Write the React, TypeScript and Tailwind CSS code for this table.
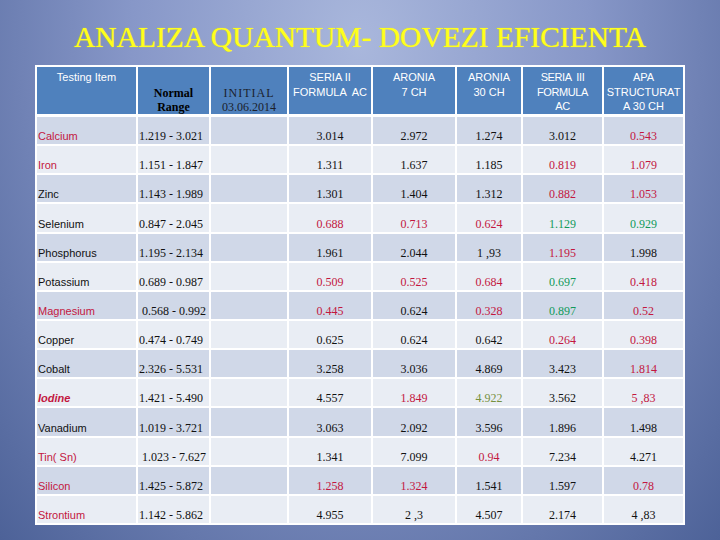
type Tone = "k" | "r" | "g" | "o";

type Row = {
  name: string;
  nameTone: Tone;
  range: string;
  rangePad?: boolean;
  italic?: boolean;
  values: [string, Tone][];
};

const tone: Record<Tone, string> = {
  k: "text-[#111111]",
  r: "text-[#c3173f]",
  g: "text-[#119a5a]",
  o: "text-[#77913e]",
};

const rows: Row[] = [
  { name: "Calcium", nameTone: "r", range: "1.219 - 3.021", values: [["3.014", "k"], ["2.972", "k"], ["1.274", "k"], ["3.012", "k"], ["0.543", "r"]] },
  { name: "Iron", nameTone: "r", range: "1.151 - 1.847", values: [["1.311", "k"], ["1.637", "k"], ["1.185", "k"], ["0.819", "r"], ["1.079", "r"]] },
  { name: "Zinc", nameTone: "k", range: "1.143 - 1.989", values: [["1.301", "k"], ["1.404", "k"], ["1.312", "k"], ["0.882", "r"], ["1.053", "r"]] },
  { name: "Selenium", nameTone: "k", range: "0.847 - 2.045", values: [["0.688", "r"], ["0.713", "r"], ["0.624", "r"], ["1.129", "g"], ["0.929", "g"]] },
  { name: "Phosphorus", nameTone: "k", range: "1.195 - 2.134", values: [["1.961", "k"], ["2.044", "k"], ["1 ,93", "k"], ["1.195", "r"], ["1.998", "k"]] },
  { name: "Potassium", nameTone: "k", range: "0.689 - 0.987", values: [["0.509", "r"], ["0.525", "r"], ["0.684", "r"], ["0.697", "g"], ["0.418", "r"]] },
  { name: "Magnesium", nameTone: "r", range: "0.568 - 0.992", rangePad: true, values: [["0.445", "r"], ["0.624", "k"], ["0.328", "r"], ["0.897", "g"], ["0.52", "r"]] },
  { name: "Copper", nameTone: "k", range: "0.474 - 0.749", values: [["0.625", "k"], ["0.624", "k"], ["0.642", "k"], ["0.264", "r"], ["0.398", "r"]] },
  { name: "Cobalt", nameTone: "k", range: "2.326 - 5.531", values: [["3.258", "k"], ["3.036", "k"], ["4.869", "k"], ["3.423", "k"], ["1.814", "r"]] },
  { name: "Iodine", nameTone: "r", italic: true, range: "1.421 - 5.490", values: [["4.557", "k"], ["1.849", "r"], ["4.922", "o"], ["3.562", "k"], ["5 ,83", "r"]] },
  { name: "Vanadium", nameTone: "k", range: "1.019 - 3.721", values: [["3.063", "k"], ["2.092", "k"], ["3.596", "k"], ["1.896", "k"], ["1.498", "k"]] },
  { name: "Tin( Sn)", nameTone: "r", range: "1.023 - 7.627", rangePad: true, values: [["1.341", "k"], ["7.099", "k"], ["0.94", "r"], ["7.234", "k"], ["4.271", "k"]] },
  { name: "Silicon", nameTone: "r", range: "1.425 - 5.872", values: [["1.258", "r"], ["1.324", "r"], ["1.541", "k"], ["1.597", "k"], ["0.78", "r"]] },
  { name: "Strontium", nameTone: "r", range: "1.142 - 5.862", values: [["4.955", "k"], ["2 ,3", "k"], ["4.507", "k"], ["2.174", "k"], ["4 ,83", "k"]] },
];

const cols = "grid-cols-[99px_71px_76px_82px_82px_64px_79px_79px]";
const sans = "font-['Liberation_Sans',Arial,sans-serif]";
const serif = "font-['Liberation_Serif','Times_New_Roman',serif]";

function HeadCell({ lines }: { lines: string[] }) {
  return (
    <div className={`bg-[#4f81bd] pt-[3px] text-center text-[11px] leading-[14.5px] text-white whitespace-pre ${sans}`}>
      {lines.map((l) => (
        <div key={l}>{l}</div>
      ))}
    </div>
  );
}

export default function App() {
  return (
    <div className="flex h-[540px] w-[720px] flex-col items-center overflow-hidden bg-[radial-gradient(ellipse_at_50%_8%,#a9b7dc_0%,#8797c8_45%,#4d6298_100%)]">
      <div className="h-[65px] pt-[23px]">
        <h1 className={`text-[29.5px] leading-[29px] text-[#ffff1e] [text-shadow:0_0_1px_#f4f000] ${serif}`}>
          ANALIZA QUANTUM- DOVEZI EFICIENTA
        </h1>
      </div>

      <div className="flex flex-col bg-white p-[2px]">
        <div className={`grid h-[47px] gap-x-[2px] ${cols}`}>
          <HeadCell lines={["Testing Item"]} />
          <div className={`flex items-end justify-center bg-[#4f81bd] text-center text-[12px] font-bold leading-[14px] text-black ${serif}`}>
            <div>
              Normal
              <br />
              Range
            </div>
          </div>
          <div className={`flex items-end justify-center bg-[#4f81bd] text-center text-[12px] leading-[14px] text-[#1b1f2c] ${serif}`}>
            <div>
              <span className="tracking-[1px]">INITIAL</span>
              <br />
              03.06.2014
            </div>
          </div>
          <HeadCell lines={["SERIA II", "FORMULA  AC"]} />
          <HeadCell lines={["ARONIA", "7 CH"]} />
          <HeadCell lines={["ARONIA", "30 CH"]} />
          <div className={`bg-[#4f81bd] pt-[3px] text-center text-[11px] leading-[14.5px] tracking-[-0.4px] text-white whitespace-pre ${sans}`}>
            <div>SERIA  III</div>
            <div>FORMULA</div>
            <div>AC</div>
          </div>
          <HeadCell lines={["APA", "STRUCTURAT", "A 30 CH"]} />
        </div>

        <div className={`mt-[3px] grid h-[406px] grid-rows-[repeat(14,minmax(0,1fr))] gap-[2px] ${cols}`}>
          {rows.map((r, i) => {
            const bg = i % 2 === 0 ? "bg-[#d0d8e8]" : "bg-[#e9edf4]";
            return [
              <div
                key={`${r.name}-n`}
                className={`${bg} flex items-end pb-[1px] pl-[1px] text-[11px] leading-[14px] ${sans} ${tone[r.nameTone]} ${r.italic ? "font-bold italic" : ""}`}
              >
                {r.name}
              </div>,
              <div
                key={`${r.name}-r`}
                className={`${bg} flex items-end pb-[1px] text-[12px] leading-[14px] text-[#111111] ${serif} ${r.rangePad ? "pl-[4px]" : "pl-[1px]"}`}
              >
                {r.range}
              </div>,
              <div key={`${r.name}-i`} className={bg} />,
              ...r.values.map(([v, t], j) => (
                <div
                  key={`${r.name}-${j}`}
                  className={`${bg} flex items-end justify-center pb-[1px] text-[12px] leading-[14px] whitespace-pre ${serif} ${tone[t]}`}
                >
                  {v}
                </div>
              )),
            ];
          })}
        </div>
      </div>
    </div>
  );
}
